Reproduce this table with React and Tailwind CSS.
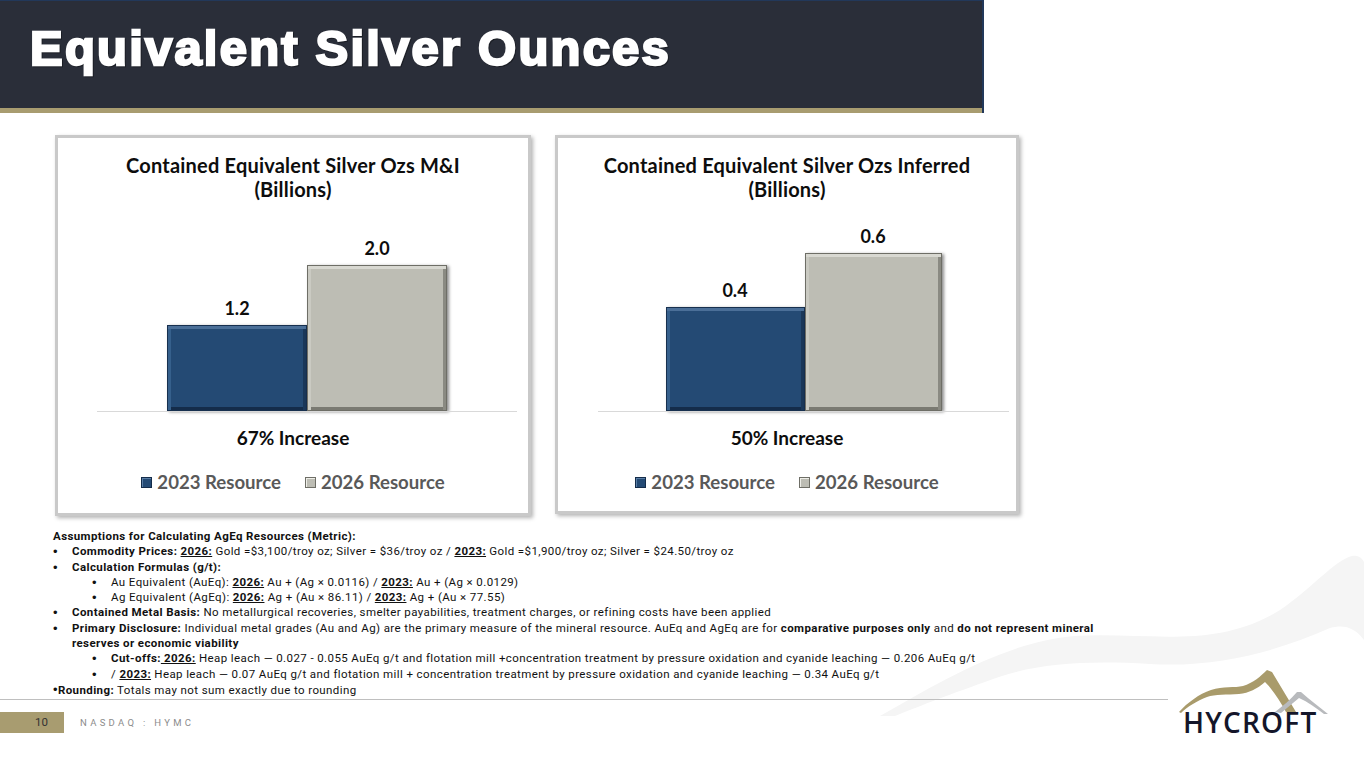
import React from "react";

const blueBar =
  "bg-[#244a74] border border-[#17304f] shadow-[inset_0_3px_0_#4b6f98,inset_3px_0_0_#36608c,inset_-3px_0_0_#1a3759,inset_0_-3px_0_#142c4a,2px_1px_3px_rgba(0,0,0,0.45)]";
const grayBar =
  "bg-[#bdbdb4] border border-[#6e6e66] shadow-[inset_0_3px_0_#d8d8d1,inset_3px_0_0_#cacac2,inset_-3px_0_0_#8a8a82,inset_0_-3px_0_#7a7a72,2px_1px_3px_rgba(0,0,0,0.45)]";

function Legend() {
  return (
    <div className="flex items-center justify-center gap-[24px] text-[18.6px] font-bold text-[#595959] leading-[22px]">
      <div className="flex items-center gap-[5px]">
        <span className="w-[11px] h-[11px] bg-[#244a74] border border-[#142c4a] shadow-[inset_1px_1px_0_#5a7ea6]" />
        <span>2023 Resource</span>
      </div>
      <div className="flex items-center gap-[5px]">
        <span className="w-[11px] h-[11px] bg-[#bdbdb4] border border-[#6e6e66] shadow-[inset_1px_1px_0_#eeeee8]" />
        <span>2026 Resource</span>
      </div>
    </div>
  );
}

function Chart({ title, width, height, plotLeft, plotWidth, bars, increase, bar1w, bar2w }) {
  return (
    <div
      className="bg-white border-[3px] border-[#c9c9c9] shadow-[2px_2px_4px_rgba(0,0,0,0.3)] flex flex-col font-['Lato','Open_Sans',sans-serif] text-[#0d0d0d]"
      style={{ width, height }}
    >
      <div className="pt-[15px] text-center font-bold text-[20px] leading-[24px] tracking-[0.2px]">
        <div>{title}</div>
        <div>(Billions)</div>
      </div>

      {/* plot */}
      <div className="flex items-end justify-center h-[210px]" style={{ marginLeft: plotLeft, width: plotWidth }}>
        {bars.map((b, i) => (
          <div key={i} className="flex flex-col items-center" style={{ width: i === 0 ? bar1w : bar2w }}>
            <div className="text-[18px] font-bold leading-[20px] mb-[7px]">{b.label}</div>
            <div className={`w-full ${i === 0 ? blueBar : grayBar}`} style={{ height: b.h }} />
          </div>
        ))}
      </div>
      <div className="border-t border-[#d9d9d9]" style={{ marginLeft: plotLeft, width: plotWidth }} />

      <div className="mt-[15px] text-center text-[19px] font-bold leading-[22px]">{increase}</div>
      <div className="mt-[22px]">
        <Legend />
      </div>
    </div>
  );
}

function Y({ children }) {
  return <span className="font-bold underline underline-offset-[1px]">{children}</span>;
}

function Bullet({ sub, children }) {
  return (
    <div className={`flex ${sub ? "pl-[39px]" : ""}`}>
      <span className="w-[19px] shrink-0 text-[13px] leading-[15.3px] font-['Liberation_Sans',sans-serif]">•</span>
      <span>{children}</span>
    </div>
  );
}

function Logo() {
  return (
    <div className="flex flex-col items-start w-[152px]">
      <svg width="152" height="46" viewBox="0 0 152 46">
        <path
          d="M2 44 C 10 35, 22 26, 34 22 C 46 18, 58 20, 66 18 C 76 15, 84 8, 90 2 L 95 4 C 103 17, 111 31, 119 44 L 109 44 C 103 33, 96 22, 88 14 C 80 21, 72 25, 62 26 C 50 27, 38 26, 30 29 C 20 33, 10 39, 4 45 Z"
          fill="#a99b6b"
        />
        <path
          d="M98 44 C 106 38, 114 31, 120 24 L 124 24 C 132 31, 142 39, 151 46 L 147 46 C 139 40, 131 34, 122 30 C 116 35, 110 40, 104 45 Z"
          fill="#b8babd"
        />
      </svg>
      <div className="-mt-[6px] ml-[6px] text-[28px] leading-[28px] font-semibold tracking-[1.2px] text-[#14162a] font-['Open_Sans',sans-serif]">
        HYCROFT
      </div>
    </div>
  );
}

export default function App() {
  return (
    <div className="relative w-[1364px] h-[766px] overflow-hidden bg-white font-['Roboto',sans-serif]">
      {/* faint swoosh in the background */}
      <svg className="absolute left-0 top-0 pointer-events-none" width="1364" height="766" viewBox="0 0 1364 766">
        <path
          d="M880 716 C 940 682, 1005 642, 1075 636 C 1150 632, 1215 650, 1280 610 C 1310 590, 1335 560, 1352 556 C 1358 555, 1362 558, 1364 562 L 1364 640 C 1355 628, 1345 624, 1330 628 C 1280 650, 1220 668, 1150 664 C 1080 660, 1030 664, 985 682 C 945 696, 915 708, 895 716 Z"
          fill="#f5f5f5"
        />
      </svg>

      <div className="relative">
        {/* Header */}
        <div className="w-[984px] border-t border-r-2 border-[#22385a]">
          <div className="h-[107px] bg-[#2a2e39] pl-[30px] pt-[23px]">
            <h1 className="text-white font-['Liberation_Sans',Arial,sans-serif] font-bold text-[49px] leading-[49px] tracking-[2.2px] [-webkit-text-stroke:2.4px_white] drop-shadow-[1px_1px_0_rgba(0,0,0,0.35)]">
              Equivalent Silver Ounces
            </h1>
          </div>
          <div className="h-[5px] bg-[#a89c70]" />
        </div>

        {/* Charts */}
        <div className="flex mt-[22px] pl-[55px] gap-[24px] items-start">
          <Chart
            title="Contained Equivalent Silver Ozs M&I"
            width={476}
            height={381}
            plotLeft={39}
            plotWidth={420}
            bar1w={140}
            bar2w={140}
            bars={[
              { label: "1.2", h: 86 },
              { label: "2.0", h: 146 },
            ]}
            increase="67% Increase"
          />
          <Chart
            title="Contained Equivalent Silver Ozs Inferred"
            width={464}
            height={379}
            plotLeft={40}
            plotWidth={411}
            bar1w={139}
            bar2w={137}
            bars={[
              { label: "0.4", h: 104 },
              { label: "0.6", h: 158 },
            ]}
            increase="50% Increase"
          />
        </div>

        {/* Bottom */}
        <div className="flex">
          <div className="w-[1168px] shrink-0">
            <div className="pt-[13px] pl-[53px] text-[11.5px] leading-[15.3px] tracking-[0.4px] text-[#111] whitespace-nowrap">
              <div className="font-bold">Assumptions for Calculating AgEq Resources (Metric):</div>
              <Bullet>
                <b>Commodity Prices: </b>
                <Y>2026:</Y> Gold =$3,100/troy oz; Silver = $36/troy oz / <Y>2023:</Y> Gold =$1,900/troy oz; Silver =
                $24.50/troy oz
              </Bullet>
              <Bullet>
                <b>Calculation Formulas (g/t):</b>
              </Bullet>
              <Bullet sub>
                Au Equivalent (AuEq): <Y>2026:</Y> Au + (Ag × 0.0116) / <Y>2023:</Y> Au + (Ag × 0.0129)
              </Bullet>
              <Bullet sub>
                Ag Equivalent (AgEq): <Y>2026:</Y> Ag + (Au × 86.11) / <Y>2023:</Y> Ag + (Au × 77.55)
              </Bullet>
              <Bullet>
                <b>Contained Metal Basis:</b> No metallurgical recoveries, smelter payabilities, treatment charges, or
                refining costs have been applied
              </Bullet>
              <Bullet>
                <b>Primary Disclosure:</b> Individual metal grades (Au and Ag) are the primary measure of the mineral
                resource. AuEq and AgEq are for <b>comparative purposes only</b> and <b>do not represent mineral</b>
              </Bullet>
              <div className="pl-[19px] font-bold">reserves or economic viability</div>
              <Bullet sub>
                <b>Cut-offs:</b>
                <Y> 2026:</Y> Heap leach — 0.027 - 0.055 AuEq g/t and flotation mill +concentration treatment by
                pressure oxidation and cyanide leaching — 0.206 AuEq g/t
              </Bullet>
              <Bullet sub>
                / <Y>2023:</Y> Heap leach — 0.07 AuEq g/t and flotation mill + concentration treatment by pressure
                oxidation and cyanide leaching — 0.34 AuEq g/t
              </Bullet>
              <div>
                <span className="text-[13px] font-['Liberation_Sans',sans-serif]">•</span>
                <b>Rounding:</b> Totals may not sum exactly due to rounding
              </div>
            </div>

            <div className="border-t border-[#bfbfbf] mt-[1px]" />

            {/* Footer */}
            <div className="flex items-center mt-[12px]">
              <div className="w-[64px] h-[21px] bg-[#a89c70] flex items-center justify-end pr-[16px] text-[11.5px] text-[#333]">
                10
              </div>
              <div className="ml-[16px] text-[9.5px] tracking-[3.3px] text-[#8c8c8c]">NASDAQ : HYMC</div>
            </div>
          </div>

          <div className="pl-[9px] pt-[152px]">
            <Logo />
          </div>
        </div>
      </div>
    </div>
  );
}
